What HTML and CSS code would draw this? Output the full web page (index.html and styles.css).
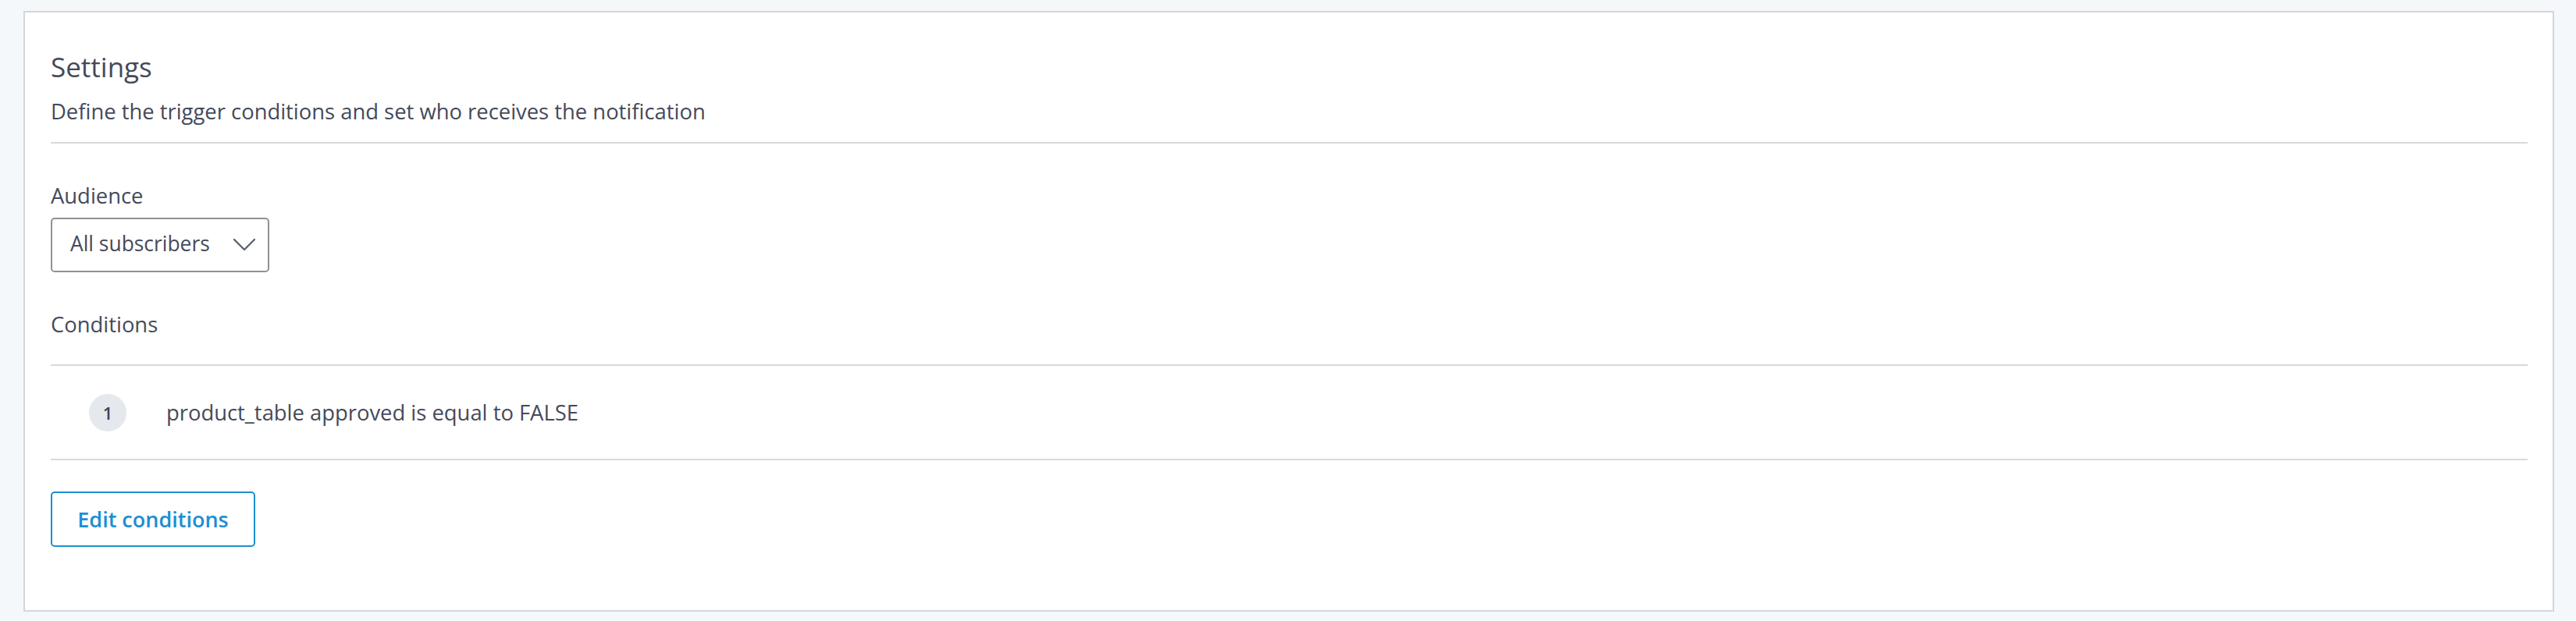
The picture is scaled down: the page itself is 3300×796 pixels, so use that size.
FILE: index.html
```html
<!DOCTYPE html>
<html lang="en">
<head>
<meta charset="utf-8">
<title>Settings</title>
<link rel="stylesheet" href="styles.css">
</head>
<body>
  <section class="card">
    <h2 class="title">Settings</h2>
    <p class="subtitle">Define the trigger conditions and set who receives the notification</p>
    <hr class="divider divider-head">

    <label class="label">Audience</label>
    <div class="select">
      <span class="select-text">All subscribers</span>
      <svg class="chevron" width="28" height="15" viewBox="0 0 28 15" aria-hidden="true">
        <polyline points="1,1 14,14 27,1" fill="none" stroke="#5d6371" stroke-width="2.4" stroke-linecap="round" stroke-linejoin="round"/>
      </svg>
    </div>

    <div class="label label-conditions">Conditions</div>
    <hr class="divider divider-cond">
    <div class="cond-row">
      <span class="badge">1</span>
      <span class="cond-text">product_table approved is equal to FALSE</span>
    </div>
    <hr class="divider">

    <button class="btn">Edit conditions</button>
  </section>
</body>
</html>
```

FILE: styles.css
```css
html, body {
  margin: 0;
  padding: 0;
}
body {
  background: #f5f8fb;
  padding: 14px 28px 12px 30px;
  font-family: "Open Sans", "Noto Sans", "Liberation Sans", sans-serif;
  color: #454a5a;
}
.card {
  background: #ffffff;
  border: 2px solid #d5d6d9;
  padding: 46px 32px 81px 33px;
  display: flex;
  flex-direction: column;
  align-items: flex-start;
}
.title {
  margin: 0;
  font-size: 35px;
  line-height: 48px;
  font-weight: 400;
  color: #454a5a;
}
.subtitle {
  margin: 13px 0 0;
  font-size: 27.4px;
  line-height: 40px;
}
.divider {
  align-self: stretch;
  border: 0;
  height: 2px;
  background: #d8d9dc;
  margin: 0;
}
.divider-head {
  margin-top: 19px;
}
.label {
  display: block;
  margin-top: 47px;
  font-size: 27.4px;
  line-height: 40px;
}
.select {
  margin-top: 8px;
  box-sizing: border-box;
  width: 280px;
  height: 70px;
  border: 2px solid #8e9196;
  border-radius: 5px;
  display: flex;
  align-items: center;
  justify-content: space-between;
  padding: 0 16px 0 23px;
}
.select-text {
  font-size: 26.4px;
  line-height: 40px;
  margin-top: -4px;
}
.chevron {
  display: block;
  margin-top: -2px;
}
.label-conditions {
  margin-top: 47px;
}
.divider-cond {
  margin-top: 31px;
}
.cond-row {
  align-self: stretch;
  height: 119px;
  display: flex;
  align-items: center;
  padding-left: 49px;
}
.badge {
  width: 48px;
  height: 48px;
  border-radius: 50%;
  background: #e5e8ec;
  color: #3f4452;
  font-size: 22px;
  font-weight: 600;
  display: flex;
  align-items: center;
  justify-content: center;
  margin-right: 51px;
}
.cond-text {
  font-size: 27.4px;
  line-height: 40px;
}
.btn {
  margin-top: 40px;
  box-sizing: border-box;
  width: 262px;
  height: 71px;
  border: 2px solid #1b8fd2;
  border-radius: 5px;
  background: #ffffff;
  color: #1b8fd2;
  font-family: inherit;
  font-size: 27px;
  font-weight: 600;
  padding: 0;
}
```
